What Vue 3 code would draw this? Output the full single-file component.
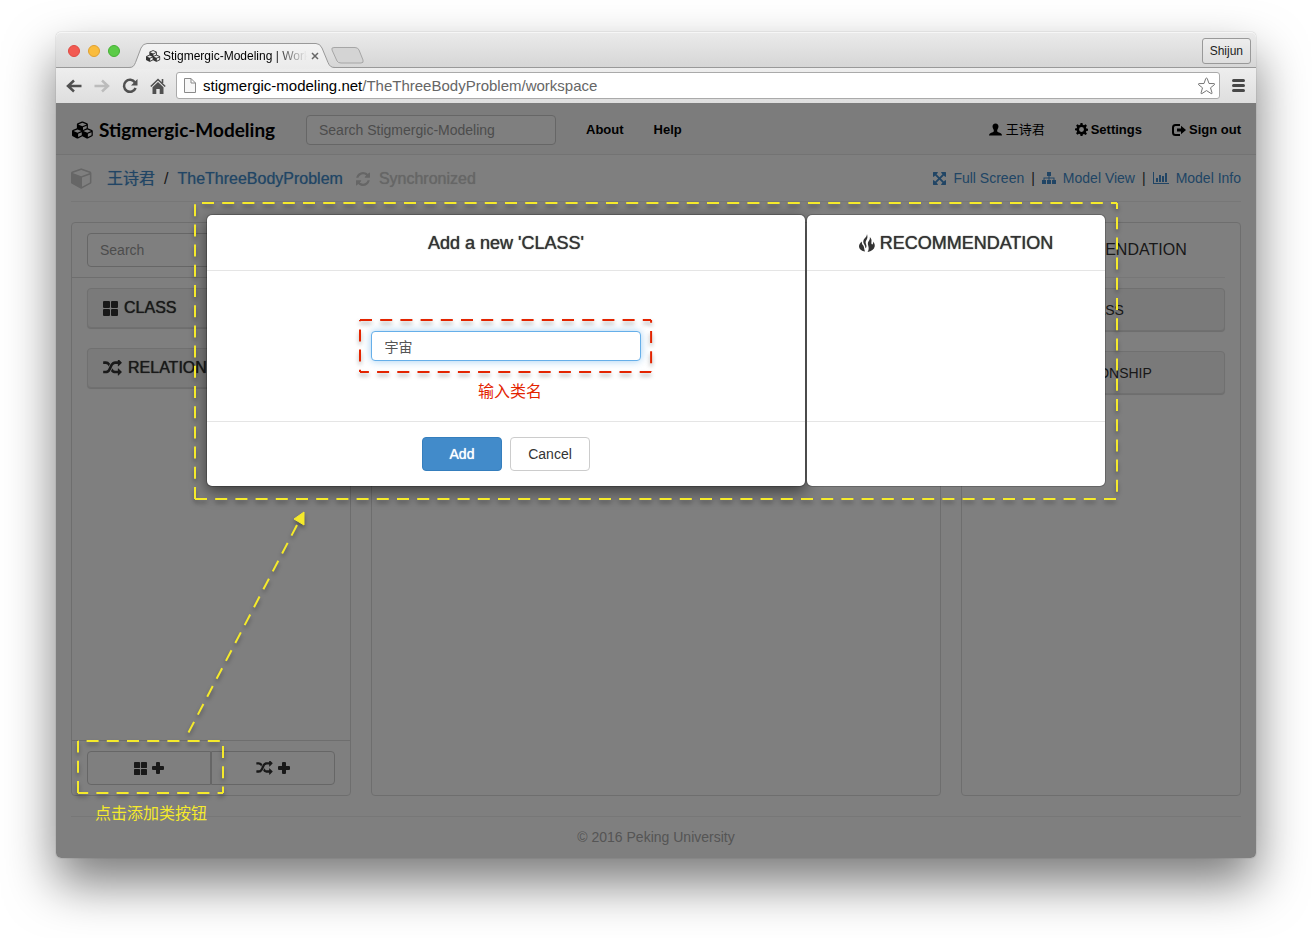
<script setup>
import { ref, h } from 'vue'

const className = ref('宇宙')
const siteQuery = ref('')
const modelQuery = ref('')

const PERIOD = 20.2

// Four dashed sides drawn clockwise; the dash phase carries over each corner.
const DashedFrame = (props) => {
  const { width, height, color, from } = props
  const phase =
    from === 'top'
      ? { top: 0, right: width, bottom: width + height, left: 2 * width + height }
      : { left: 0, top: height, right: height + width, bottom: 2 * height + width }
  const side = (name, x1, y1, x2, y2) =>
    h('line', {
      x1, y1, x2, y2,
      stroke: color,
      'stroke-width': 2,
      'stroke-dasharray': `12 ${PERIOD - 12}`,
      'stroke-dashoffset': phase[name] % PERIOD,
    })
  return h('svg', { 'aria-hidden': 'true' }, [
    side('left', '0', '100%', '0', '0'),
    side('top', '0', '0', '100%', '0'),
    side('right', '100%', '0', '100%', '100%'),
    side('bottom', '100%', '100%', '0', '100%'),
  ])
}
DashedFrame.props = ['width', 'height', 'color', 'from']

const shapes = {
  cubes: ['0 0 2304 1792', 'M640 1632l384-192v-314l-384 164v342zm-64-454l404-173-404-173-404 173zm1088 454l384-192v-314l-384 164v342zm-64-454l404-173-404-173-404 173zm-448-293l384-165v-266l-384 164v267zm-64-379l441-189-441-189-441 189zm1088 518v416q0 36-19 67t-52 47l-448 224q-25 14-57 14t-57-14l-448-224q-4-2-7-4-2 2-7 4l-448 224q-25 14-57 14t-57-14l-448-224q-33-16-52-47t-19-67v-416q0-38 21.500-70t56.500-48l434-186v-400q0-38 21.500-70t56.500-48l448-192q23-10 50-10t50 10l448 192q35 16 56.500 48t21.500 70v400l434 186q36 16 57 48t21 70z'],
  cube: ['0 100 1792 1792', 'M896 1629l640-349v-636l-640 233v752zm-64-865l698-254-698-254-698 254zm832-252v768q0 35-18 65t-49 47l-704 384q-28 16-61 16t-61-16l-704-384q-31-17-49-47t-18-65v-768q0-40 23-73t61-47l704-256q22-8 44-8t44 8l704 256q38 14 61 47t23 73z'],
  refresh: ['128 128 1536 1536', 'M1639 1056q0 5-1 7-64 268-268 434.500t-478 166.500q-146 0-282.500-55t-243.500-157l-129 129q-19 19-45 19t-45-19-19-45v-448q0-26 19-45t45-19h448q26 0 45 19t19 45-19 45l-137 137q71 66 161 102t187 36q134 0 250-65t186-179q11-17 53-117 8-23 30-23h192q13 0 22.500 9.500t9.500 22.500zm25-800v448q0 26-19 45t-45 19h-448q-26 0-45-19t-19-45 19-45l138-138q-148-137-349-137-134 0-250 65t-186 179q-11 17-53 117-8 23-30 23h-199q-13 0-22.500-9.500t-9.500-22.500v-7q65-268 270-434.500t480-166.500q146 0 284 55.500t245 156.500l130-129q19-19 45-19t45 19 19 45z'],
  expand: ['128 128 1536 1536', 'M1411 541l-355 355 355 355 144-144q29-31 70-14 39 17 39 59v448q0 26-19 45t-45 19h-448q-42 0-59-40-17-39 14-69l144-144-355-355-355 355 144 144q31 30 14 69-17 40-59 40h-448q-26 0-45-19t-19-45v-448q0-42 40-59 39-17 69 14l144 144 355-355-355-355-144 144q-19 19-45 19-12 0-24-5-40-17-40-59v-448q0-26 19-45t45-19h448q42 0 59 40 17 39-14 69l-144 144 355 355 355-355-144-144q-31-30-14-69 17-40 59-40h448q26 0 45 19t19 45v448q0 42-39 59-13 5-25 5-26 0-45-19z'],
  sitemap: ['0 0 14 12', 'M5 0h4v4H7.500v1.500H12.500V8H14v4h-4V8h1.500V6.500h-4V8H9v4H5V8h1.500V6.500h-4V8H4v4H0V8h1.500V5.500h5V4H5z'],
  chart: ['0 0 16 12', 'M0 0h1v11h15v1H0zM3 6h2v4H3zM6 3h2v7H6zM9 4h2v6H9zM12 1h2v9h-2z'],
  large: ['0 0 15 15', 'M1 0h5q1 0 1 1v5q0 1-1 1H1Q0 7 0 6V1q0-1 1-1zM9 0h5q1 0 1 1v5q0 1-1 1H9Q8 7 8 6V1q0-1 1-1zM1 8h5q1 0 1 1v5q0 1-1 1H1q-1 0-1-1V9q0-1 1-1zM9 8h5q1 0 1 1v5q0 1-1 1H9q-1 0-1-1V9q0-1 1-1z'],
  random: ['0 128 1792 1536', 'M666 481q-60 92-137 273-22-45-37-72.500t-40.500-63.500-51-56.500-63-35-81.500-14.500h-224q-14 0-23-9t-9-23v-192q0-14 9-23t23-9h224q250 0 410 225zm1126 799q0 14-9 23l-320 320q-9 9-23 9-13 0-22.500-9.500t-9.500-22.500v-192q-32 0-85 .5t-81 1-73-1-71-5-64-10.500-63-18.500-58-28.500-59-40-55-53.500-56-69.500q59-93 136-273 22 45 37 72.500t40.500 63.500 51 56.500 63 35 81.500 14.500h256v-192q0-14 9-23t23-9q12 0 24 10l319 319q9 9 9 23zm0-896q0 14-9 23l-320 320q-9 9-23 9-13 0-22.500-9.500t-9.500-22.500v-192h-256q-48 0-87 15t-69 45-51 61.500-45 77.500q-32 62-78 171-29 66-49.500 111t-54 105-64 100-74 83-90 68.500-106.500 42-128 16.500h-224q-14 0-23-9t-9-23v-192q0-14 9-23t23-9h224q48 0 87-15t69-45 51-61.500 45-77.500q32-62 78-171 29-66 49.500-111t54-105 64-100 74-83 90-68.500 106.500-42 128-16.500h256v-192q0-14 9-23t23-9q12 0 24 10l319 319q9 9 9 23z'],
  plus: ['0 0 12 12', 'M4 1q0-1 1-1h2q1 0 1 1v3h3q1 0 1 1v2q0 1-1 1H8v3q0 1-1 1H5q-1 0-1-1V8H1Q0 8 0 7V5q0-1 1-1h3z'],
  user: ['0 0 14 13', 'M7 0c2.200 0 3.300 1.500 3.200 3.400C10.100 5 9.500 6 9 6.800c-.3.500-.3 1.700.1 2 .8.600 2.600 1 3.900 1.900.7.500 1 1.300 1 2.300H0c0-1 .3-1.800 1-2.300 1.300-.9 3.100-1.300 3.900-1.900.4-.3.400-1.500.1-2C4.500 6 3.900 5 3.800 3.400 3.700 1.500 4.800 0 7 0z'],
  cog: ['0 0 16 16', 'M6.800 0h2.400l.4 2.300 1.500.6 1.900-1.300 1.700 1.700-1.300 1.900.6 1.500 2 .3v2.400l-2 .3-.6 1.500 1.300 1.900-1.700 1.700-1.900-1.300-1.500.6L9.200 16H6.800l-.4-2.300-1.500-.6L3 14.400l-1.700-1.700 1.300-1.900L2 9.300l-2-.3V6.700l2-.3.600-1.500L1.300 3.300 3 1.600l1.900 1.300 1.500-.6zM8 5a3 3 0 1 0 0 6 3 3 0 1 0 0-6z'],
  logout: ['0 0 14 12', 'M8 0v2H3.500Q2 2 2 3.500v5Q2 10 3.500 10H8v2H3.500Q0 12 0 8.500v-5Q0 0 3.500 0zM9 1.800L14 6l-5 4.200V7.500H5v-3h4z'],
  fire: ['0 0 16 18', 'M2.800 7.500C2.700 9.500 3.300 10.500 4.300 11.500 5.300 13 5 15 6 17.500 3 17 0 15.500 0 12.300 0 10.300 1.300 8.800 2.800 7.500zM8 0C8.800 2.800 8.500 4.500 7.300 6.300 6.200 8 6.800 9.500 7.300 11 7.700 12.300 7.500 13.500 6.500 14.300 6.300 12 5.500 11 4.700 9.500 3.700 7.500 4.500 5.500 5.800 4.200 7.200 2.800 8 1.500 8 0zM10.800 3C12.500 4.500 12.800 6.300 12.400 8.200 12.200 9.500 12.600 10.300 13.300 10.500 14.200 9.800 14.300 8.500 14 7.500 15.500 9 16 10.800 15.700 12.500 15.200 15.300 12.500 17.200 8.500 18 10 16 9.800 14 9.300 12 8.600 9.800 8.700 8.500 9.800 7 10.800 5.700 11.100 4.500 10.800 3z'],
}

const Icon = (props) =>
  h('svg', { viewBox: shapes[props.name][0], fill: 'currentColor', 'aria-hidden': 'true' }, [
    h('path', { d: shapes[props.name][1], 'fill-rule': 'evenodd' }),
  ])
Icon.props = ['name']
</script>

<template>
  <div class="desktop">
    <div class="window">
      <div class="tabbar">
        <div class="lights"><i class="red"></i><i class="amber"></i><i class="green"></i></div>
        <div class="tab">
          <svg class="tab-shape" width="206" height="26" viewBox="0 0 206 26" aria-hidden="true">
            <defs>
              <linearGradient id="tabfill" x1="0" y1="0" x2="0" y2="1">
                <stop offset="0" stop-color="#f3f3f3" /><stop offset="1" stop-color="#ebebeb" />
              </linearGradient>
            </defs>
            <path d="M0 24.500C4 24.500 5 23 6.500 19.500L12 5Q14 .5 18 .5H187Q191 .5 193 5L199 19.500C200.500 23 202 24.500 206 24.500V26H0z" fill="url(#tabfill)" />
            <path d="M0 24.500C4 24.500 5 23 6.500 19.500L12 5Q14 .5 18 .5H187Q191 .5 193 5L199 19.500C200.500 23 202 24.500 206 24.500" fill="none" stroke="#999" />
          </svg>
          <Icon name="cubes" class="tab-icon" />
          <span class="tab-title">Stigmergic-Modeling | Work</span>
          <button class="tab-close" aria-label="Close tab">
            <svg width="8" height="8" viewBox="0 0 8 8"><path d="M1 1l6 6M7 1l-6 6" stroke="#666" stroke-width="1.500" /></svg>
          </button>
        </div>
        <button class="new-tab" aria-label="New tab">
          <svg width="33" height="17" viewBox="0 0 33 17"><path d="M3 .5H24Q27 .5 28 3L32 13Q33 16 30 16H10Q7 16 6 14L1 3Q0 .5 3 .5z" fill="#d4d4d4" stroke="#a6a6a6" /></svg>
        </button>
        <button class="profile">Shijun</button>
      </div>

      <div class="toolbar">
        <button class="tool" aria-label="Back">
          <svg width="16" height="14" viewBox="0 0 16 14"><path d="M15.500 7H3M8 1.500L2 7l6 5.500" fill="none" stroke="#505050" stroke-width="2.500" /></svg>
        </button>
        <button class="tool" aria-label="Forward">
          <svg width="16" height="14" viewBox="0 0 16 14"><path d="M.5 7H13M8 1.500L14 7l-6 5.500" fill="none" stroke="#bcbcbc" stroke-width="2.500" /></svg>
        </button>
        <button class="tool" aria-label="Reload">
          <svg width="16" height="16" viewBox="0 0 16 16"><path d="M13 4.500A6 6 0 1 0 13.600 10" fill="none" stroke="#505050" stroke-width="2.500" /><path d="M15.500 1v6.500H9z" fill="#505050" /></svg>
        </button>
        <button class="tool" aria-label="Home">
          <svg width="16" height="16" viewBox="0 0 16 16"><path d="M.8 8.500L8 1.500l7.200 7M12.500 1v4" fill="none" stroke="#505050" stroke-width="1.600" /><path d="M8 4l5.500 5.300V16H9.700v-5H6.300v5H2.500V9.300z" fill="#505050" /></svg>
        </button>
        <div class="omnibox">
          <svg width="12" height="15" viewBox="0 0 12 15" aria-hidden="true"><path d="M.5.5H7l4.500 4.500v9.500H.5zM7 .5V5h4.500" fill="#f7f7f7" stroke="#8a8a8a" /></svg>
          <span class="url"><b>stigmergic-modeling.net</b>/TheThreeBodyProblem/workspace</span>
          <button class="star" aria-label="Bookmark this page">
            <svg width="19" height="18" viewBox="0 0 19 18"><path d="M9.500 1Q10 1 10.300 1.700L12 6.500l5 .1q1.300.2.400 1.100L13.500 10.800 15 15.800q.2 1.300-.9.700L9.500 13.600 5 16.500q-1.200.6-.9-.7L5.500 10.800 1.600 7.700Q.8 6.800 2 6.600l5-.1L8.700 1.700Q9 1 9.500 1z" fill="#fff" stroke="#777" /></svg>
          </button>
        </div>
        <button class="menu" aria-label="Menu">
          <svg width="13" height="13" viewBox="0 0 13 13"><path d="M1.500 1.500h10M1.500 6.500h10M1.500 11.500h10" stroke="#484848" stroke-width="3" stroke-linecap="round" /></svg>
        </button>
      </div>

      <div class="page">
        <nav class="nav">
          <a href="#" class="brand"><Icon name="cubes" class="brand-icon" />Stigmergic-Modeling</a>
          <input v-model="siteQuery" class="field site-search" type="text" placeholder="Search Stigmergic-Modeling" aria-label="Search Stigmergic-Modeling" />
          <a href="#">About</a>
          <a href="#">Help</a>
          <div class="account">
            <a href="#" class="name"><Icon name="user" class="i-user" />王诗君</a>
            <a href="#"><Icon name="cog" class="i-cog" />Settings</a>
            <a href="#"><Icon name="logout" class="i-out" />Sign out</a>
          </div>
        </nav>

        <header class="model-bar">
          <Icon name="cube" class="i-cube" />
          <div class="crumbs"><a href="#">王诗君</a><span>/</span><a href="#">TheThreeBodyProblem</a></div>
          <div class="sync"><Icon name="refresh" class="i-sync" />Synchronized</div>
          <div class="views">
            <a href="#"><Icon name="expand" class="i-expand" />Full Screen</a><span>|</span>
            <a href="#"><Icon name="sitemap" class="i-map" />Model View</a><span>|</span>
            <a href="#"><Icon name="chart" class="i-chart" />Model Info</a>
          </div>
        </header>

        <main class="columns">
          <section class="panel elements">
            <div class="panel-search">
              <input v-model="modelQuery" class="field" type="text" placeholder="Search" aria-label="Search" />
            </div>
            <div class="list">
              <div class="well"><Icon name="large" class="i-large" />CLASS</div>
              <div class="well"><Icon name="random" class="i-random" />RELATIONSHIP</div>
            </div>
            <div class="panel-actions">
              <button class="add first" aria-label="Add class"><Icon name="large" class="i-small" /><Icon name="plus" class="i-plus" /></button>
              <button class="add last" aria-label="Add relationship"><Icon name="random" class="i-mix" /><Icon name="plus" class="i-plus" /></button>
              <div class="callout">
                <DashedFrame class="dash around-add" :width="145" :height="52" color="#f5ea2b" from="bottom" />
                <svg class="arrow" width="130" height="230" viewBox="0 0 130 230" aria-hidden="true">
                  <path d="M8.500 227.500L117 20" stroke="#f5ea2b" stroke-width="2" stroke-dasharray="12 8.200" />
                  <path d="M124 7L114 14l10 6z" fill="#f5ea2b" stroke="#f5ea2b" />
                </svg>
                <span class="hint">点击添加类按钮</span>
              </div>
            </div>
          </section>
          <section class="panel"></section>
          <section class="panel advice">
            <h3><Icon name="fire" class="i-fire-small" />RECOMMENDATION</h3>
            <div class="well">CLASS</div>
            <div class="well">RELATIONSHIP</div>
          </section>
        </main>

        <footer class="foot">© 2016 Peking University</footer>

        <div class="backdrop"></div>

        <div class="dialog" role="dialog" aria-label="Add a new class">
          <form class="card main-card" @submit.prevent>
            <h4>Add a new 'CLASS'</h4>
            <div class="card-body">
              <div class="name-box">
                <input v-model="className" class="name-field" type="text" aria-label="Class name" />
                <DashedFrame class="dash around-name" :width="292" :height="52" color="#e32400" from="top" />
                <span class="name-hint">输入类名</span>
              </div>
            </div>
            <div class="card-foot">
              <button class="btn primary" type="submit">Add</button>
              <button class="btn" type="button">Cancel</button>
            </div>
          </form>
          <div class="card side-card">
            <h4><Icon name="fire" class="i-fire" />RECOMMENDATION</h4>
            <div class="card-body"></div>
            <div class="card-foot"></div>
          </div>
          <DashedFrame class="dash around-dialog" :width="922" :height="296" color="#f5ea2b" from="bottom" />
        </div>
      </div>
    </div>
  </div>
</template>

<style>
body {
  margin: 0;
  background: #fff;
}
</style>

<style scoped>
* {
  box-sizing: border-box;
}
.desktop {
  display: flex;
  min-height: 100vh;
  padding: 32px 56px 80px;
  overflow: hidden;
  font-family: "Liberation Sans", "Noto Sans CJK SC", sans-serif;
  font-size: 14px;
  line-height: 20px;
  color: #333;
}
button,
input {
  font: inherit;
  color: inherit;
}
button {
  display: flex;
  align-items: center;
  justify-content: center;
  padding: 0;
  border: 0;
  background: none;
}
a {
  color: #428bca;
  text-decoration: none;
}
svg {
  display: block;
  flex: none;
}
.window {
  flex: 1;
  min-width: 0;
  display: flex;
  flex-direction: column;
  border-radius: 5px;
  box-shadow: 0 0 1px rgba(0, 0, 0, 0.5), 0 25px 50px rgba(0, 0, 0, 0.52);
}

/* browser chrome */
.tabbar {
  display: flex;
  align-items: flex-end;
  height: 36px;
  padding: 0 5px 0 12px;
  border-bottom: 1px solid #999;
  border-radius: 5px 5px 0 0;
  background: linear-gradient(#ebebeb, #d6d6d6);
  box-shadow: inset 0 1px #f6f6f6;
}
.lights {
  display: flex;
  gap: 8px;
  align-self: center;
  margin-top: 3px;
}
.lights i {
  width: 12px;
  height: 12px;
  border-radius: 50%;
}
.red {
  background: #f25a52;
  border: 1px solid #df4a43;
}
.amber {
  background: #fabc3d;
  border: 1px solid #e0a030;
}
.green {
  background: #5bcb47;
  border: 1px solid #45b034;
}
.tab {
  position: relative;
  display: flex;
  align-items: center;
  width: 206px;
  height: 25px;
  margin: 0 -4px -1px 9px;
  padding: 0 16px 0 17px;
}
.tab-shape {
  position: absolute;
  left: 0;
  top: 0;
}
.tab-icon {
  position: relative;
  width: 15px;
  height: 12px;
  margin-right: 2px;
}
.tab-title {
  position: relative;
  width: 144px;
  white-space: nowrap;
  font-size: 12px;
  color: #000;
  -webkit-mask-image: linear-gradient(90deg, #000 110px, transparent);
  mask-image: linear-gradient(90deg, #000 110px, transparent);
}
.tab-close {
  position: relative;
  margin-left: 4px;
}
.new-tab {
  margin: 0 0 3px;
}
.profile {
  align-self: center;
  height: 26px;
  margin-left: auto;
  margin-top: 3px;
  padding: 0 7px;
  border: 1px solid #999;
  border-radius: 3px;
  font-size: 12px;
  color: #222;
  background: linear-gradient(#ededed, #dedede);
}
.toolbar {
  display: flex;
  align-items: center;
  gap: 12px;
  height: 35px;
  padding: 0 11px 0 10px;
  background: linear-gradient(#eee, #dedede);
}
.omnibox {
  flex: 1;
  display: flex;
  align-items: center;
  height: 27px;
  margin-left: -2px;
  padding: 0 3px 0 7px;
  border: 1px solid #aaa;
  border-radius: 3px;
  background: #fff;
}
.url {
  margin-left: 7px;
  font-size: 15px;
  color: #666;
}
.url b {
  font-weight: 400;
  color: #000;
}
.star {
  margin-left: auto;
}

/* page */
.page {
  position: relative;
  flex: 1;
  display: flex;
  flex-direction: column;
  border-radius: 0 0 5px 5px;
  background: #fff;
}
.nav {
  display: flex;
  align-items: center;
  gap: 30px;
  height: 52px;
  padding: 2px 15px 0 16px;
  border-bottom: 1px solid #e7e7e7;
  background: #f8f8f8;
  font-size: 13px;
  font-weight: 700;
}
.nav a {
  display: flex;
  align-items: center;
  color: #000;
}
.nav .brand {
  width: 204px;
  font-family: Lato, sans-serif;
  font-size: 19px;
  font-weight: 700;
  white-space: nowrap;
}
.brand-icon {
  width: 22px;
  height: 18px;
  margin-right: 5px;
}
.account {
  display: flex;
  gap: 30px;
  margin-left: auto;
}
.account .name {
  font-weight: 400;
}
.i-user {
  width: 13px;
  height: 13px;
  margin-right: 4px;
}
.i-cog {
  width: 13px;
  height: 13px;
  margin-right: 3px;
}
.i-out {
  width: 14px;
  height: 12px;
  margin-right: 3px;
}
.field {
  display: block;
  width: 100%;
  height: 34px;
  padding: 0 12px;
  border: 1px solid #ccc;
  border-radius: 4px;
  background: #fff;
  font-size: 14px;
  outline: 0;
}
.field::placeholder {
  color: #999;
  opacity: 1;
}
.site-search {
  width: 250px;
  height: 30px;
  font-weight: 400;
}
.model-bar {
  display: flex;
  align-items: center;
  height: 47px;
  margin: 0 15px;
  padding-top: 2px;
  border-bottom: 1px solid #eee;
  font-size: 16px;
}
.i-cube {
  width: 22px;
  height: 22px;
  margin-right: 14px;
  color: #ccc;
}
.crumbs {
  display: flex;
  gap: 9px;
}
.crumbs a {
  text-shadow: 0 0 1px rgba(66, 139, 202, 0.6);
}
.sync {
  display: flex;
  align-items: center;
  gap: 9px;
  margin-left: 13px;
  color: #ccc;
  text-shadow: 0 0 1px #ccc;
}
.i-sync {
  width: 14px;
  height: 14px;
}
.views {
  display: flex;
  gap: 7px;
  margin-left: auto;
  padding-bottom: 2px;
  font-size: 14px;
}
.views a {
  display: flex;
  align-items: center;
  gap: 7px;
}
.i-expand {
  width: 13px;
  height: 13px;
}
.i-map {
  width: 14px;
  height: 12px;
}
.i-chart {
  width: 16px;
  height: 12px;
}
.columns {
  flex: 1;
  display: grid;
  grid-template-columns: 28fr 57fr 28fr;
  gap: 20px;
  margin: 20px 15px;
}
.panel {
  display: flex;
  flex-direction: column;
  min-width: 0;
  border: 1px solid #ddd;
  border-radius: 4px;
}
.panel-search {
  padding: 10px 15px;
  border-bottom: 1px solid #ddd;
}
.list {
  flex: 1;
  display: flex;
  flex-direction: column;
  gap: 20px;
  padding: 10px 15px;
}
.well {
  display: flex;
  align-items: center;
  height: 40px;
  padding: 0 15px;
  border: 1px solid #e0e0e0;
  border-radius: 4px;
  background: #f5f5f5;
  font-size: 16px;
  box-shadow: 0 1px 1px rgba(0, 0, 0, 0.15);
}
.elements .well {
  text-shadow: 0 0 1px #333;
}
.i-large {
  width: 15px;
  height: 15px;
  margin-right: 6px;
}
.i-random {
  width: 19px;
  height: 16px;
  margin-right: 6px;
}
.panel-actions {
  position: relative;
  display: flex;
  padding: 10px 15px;
  border-top: 1px solid #ddd;
}
.add {
  flex: 1;
  gap: 5px;
  height: 34px;
  border: 1px solid #ccc;
}
.first {
  border-radius: 4px 0 0 4px;
}
.last {
  border-radius: 0 4px 4px 0;
}
.i-small {
  width: 13px;
  height: 13px;
}
.i-mix {
  width: 17px;
  height: 14px;
}
.i-plus {
  width: 12px;
  height: 12px;
}
.advice {
  gap: 20px;
  padding: 0 15px;
}
.advice h3 {
  display: flex;
  align-items: center;
  justify-content: center;
  gap: 4px;
  height: 55px;
  margin: 0 0 -10px;
  border-bottom: 1px solid #eee;
  font-size: 16px;
  font-weight: 400;
}
.advice .well {
  justify-content: center;
  height: 43px;
  font-size: 14px;
}
.i-fire-small {
  width: 13px;
  height: 15px;
}
.foot {
  height: 42px;
  margin: 0 15px;
  padding-top: 10px;
  border-top: 1px solid #eee;
  text-align: center;
  color: #aaa;
}
.backdrop {
  position: absolute;
  inset: 0;
  z-index: 2;
  border-radius: 0 0 5px 5px;
  background: rgba(0, 0, 0, 0.5);
}

/* dialog */
.dialog {
  position: absolute;
  top: 111px;
  left: 50%;
  z-index: 3;
  display: grid;
  grid-template-columns: 2fr 1fr;
  width: 75%;
  transform: translateX(-50%);
}
.card {
  border: 1px solid rgba(0, 0, 0, 0.2);
  border-radius: 6px;
  background: #fff;
  background-clip: padding-box;
}
.main-card {
  box-shadow: 0 5px 15px rgba(0, 0, 0, 0.5);
}
.card h4 {
  display: flex;
  align-items: center;
  justify-content: center;
  gap: 5px;
  height: 56px;
  margin: 0;
  border-bottom: 1px solid #e5e5e5;
  font-size: 18px;
  font-weight: 400;
  text-shadow: 0 0 1px #333;
}
.i-fire {
  width: 16px;
  height: 18px;
}
.card-body {
  display: flex;
  justify-content: center;
  height: 150px;
  padding-top: 60px;
}
.name-box {
  position: relative;
  width: 45%;
  height: 30px;
}
.name-field {
  width: 100%;
  height: 30px;
  padding: 0 12px;
  border: 1px solid #66afe9;
  border-radius: 4px;
  background: #fff;
  color: #555;
  outline: 0;
  box-shadow: 0 0 8px rgba(102, 175, 233, 0.6);
}
.card-foot {
  display: flex;
  justify-content: center;
  gap: 8px;
  height: 65px;
  padding: 15px;
  border-top: 1px solid #e5e5e5;
}
.btn {
  width: 80px;
  height: 34px;
  border: 1px solid #ccc;
  border-radius: 4px;
  background: #fff;
}
.primary {
  border-color: #357ebd;
  background: #428bca;
  color: #fff;
  text-shadow: 0 0 1px #fff;
}

/* annotations */
.callout {
  position: absolute;
  top: 10px;
  left: 15px;
  z-index: 4;
  width: 125px;
  height: 34px;
  pointer-events: none;
}
.dash {
  position: absolute;
  overflow: visible;
  pointer-events: none;
  filter: drop-shadow(0 3px 2px rgba(0, 0, 0, 0.35));
}
.around-add {
  top: -10px;
  left: -9px;
  width: calc(100% + 20px);
  height: calc(100% + 18px);
}
.around-name {
  top: -11px;
  left: -11px;
  width: calc(100% + 22px);
  height: calc(100% + 22px);
}
.around-dialog {
  top: -11px;
  left: -11px;
  width: calc(100% + 22px);
  height: calc(100% + 23px);
}
.arrow {
  position: absolute;
  left: 93px;
  bottom: calc(100% + 16px);
  filter: drop-shadow(0 3px 2px rgba(0, 0, 0, 0.35));
}
.hint,
.name-hint {
  position: absolute;
  white-space: nowrap;
  font-size: 16px;
}
.hint {
  top: 53px;
  left: 8px;
  color: #f5ea2b;
}
.name-hint {
  top: 51px;
  left: 0;
  right: 0;
  padding-left: 8px;
  text-align: center;
  color: #e32400;
}
</style>
